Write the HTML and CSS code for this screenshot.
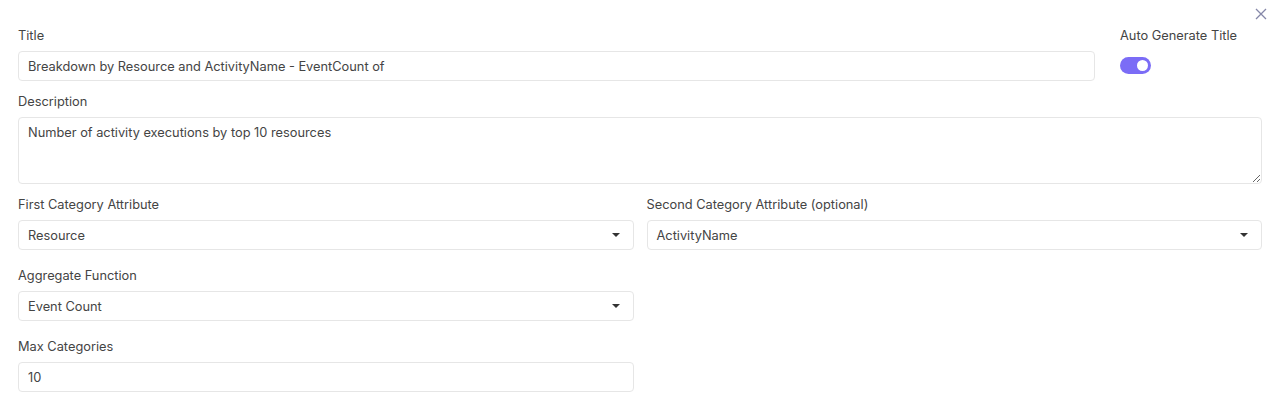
FILE: index.html
```html
<!DOCTYPE html>
<html>
<head>
    <title>Chart settings</title>
    <link rel="stylesheet" href="styles.css">
</head>
<body>
<div class="dialog">
    <button class="close-btn" type="button" aria-label="Close">
        <svg width="12" height="12" viewBox="0 0 12 12">
            <path d="M1 1 L11 11 M11 1 L1 11" stroke="#8587a8" stroke-width="1.3" fill="none"/>
        </svg>
    </button>

    <div class="title-row">
        <div class="field title-field">
            <label>Title</label>
            <input class="text-input" type="text" value="Breakdown by Resource and ActivityName - EventCount of">
        </div>
        <div class="field auto-field">
            <label>Auto Generate Title</label>
            <span class="toggle"><span class="knob"></span></span>
        </div>
    </div>

    <div class="field">
        <label>Description</label>
        <textarea class="text-area">Number of activity executions by top 10 resources</textarea>
    </div>

    <div class="grid">
        <div class="field">
            <label>First Category Attribute</label>
            <div class="select">Resource<span class="caret"></span></div>
        </div>
        <div class="field">
            <label>Second Category Attribute (optional)</label>
            <div class="select">ActivityName<span class="caret"></span></div>
        </div>
        <div class="field">
            <label>Aggregate Function</label>
            <div class="select">Event Count<span class="caret"></span></div>
        </div>
        <div></div>
        <div class="field">
            <label>Max Categories</label>
            <input class="text-input" type="text" value="10">
        </div>
    </div>
</div>
</body>
</html>
```

FILE: styles.css
```css
* {
    margin: 0;
    box-sizing: border-box;
}

body {
    background: #fff;
    font-family: Inter, "Noto Sans", sans-serif;
    font-size: 12.8px;
    color: #444;
}

.dialog {
    position: relative;
    padding: 28px 18px 0 18px;
}

.close-btn {
    position: absolute;
    top: 8px;
    right: 13px;
    border: none;
    background: none;
    padding: 0;
    width: 12px;
    height: 12px;
}

.field {
    display: flex;
    flex-direction: column;
    margin-bottom: 13px;
}

.field label {
    line-height: 16px;
    margin-bottom: 7px;
    color: #444;
}

.title-row {
    display: flex;
    gap: 25px;
}

.title-field {
    flex: 1;
}

.auto-field {
    width: 142px;
}

.toggle {
    display: block;
    width: 31px;
    height: 17px;
    margin-top: 6px;
    border-radius: 9px;
    background: #7b6cf6;
    position: relative;
}

.knob {
    position: absolute;
    right: 3px;
    top: 3px;
    width: 11px;
    height: 11px;
    border-radius: 50%;
    background: #fff;
}

.text-input,
.select,
.text-area {
    font-family: inherit;
    font-size: 12.8px;
    color: #444;
    border: 1px solid #e6e6e6;
    border-radius: 4px;
    background: #fff;
    padding: 0 9px;
    height: 30px;
    outline: none;
}

.text-area {
    height: 67px;
    padding: 7px 9px;
    resize: vertical;
}

.select {
    display: flex;
    align-items: center;
    justify-content: space-between;
}

.caret {
    width: 0;
    height: 0;
    border-left: 4px solid transparent;
    border-right: 4px solid transparent;
    border-top: 4px solid #333;
    margin-right: 4px;
}

.grid {
    display: grid;
    grid-template-columns: 1fr 1fr;
    column-gap: 13px;
}

.grid .field {
    margin-bottom: 18px;
}
```
